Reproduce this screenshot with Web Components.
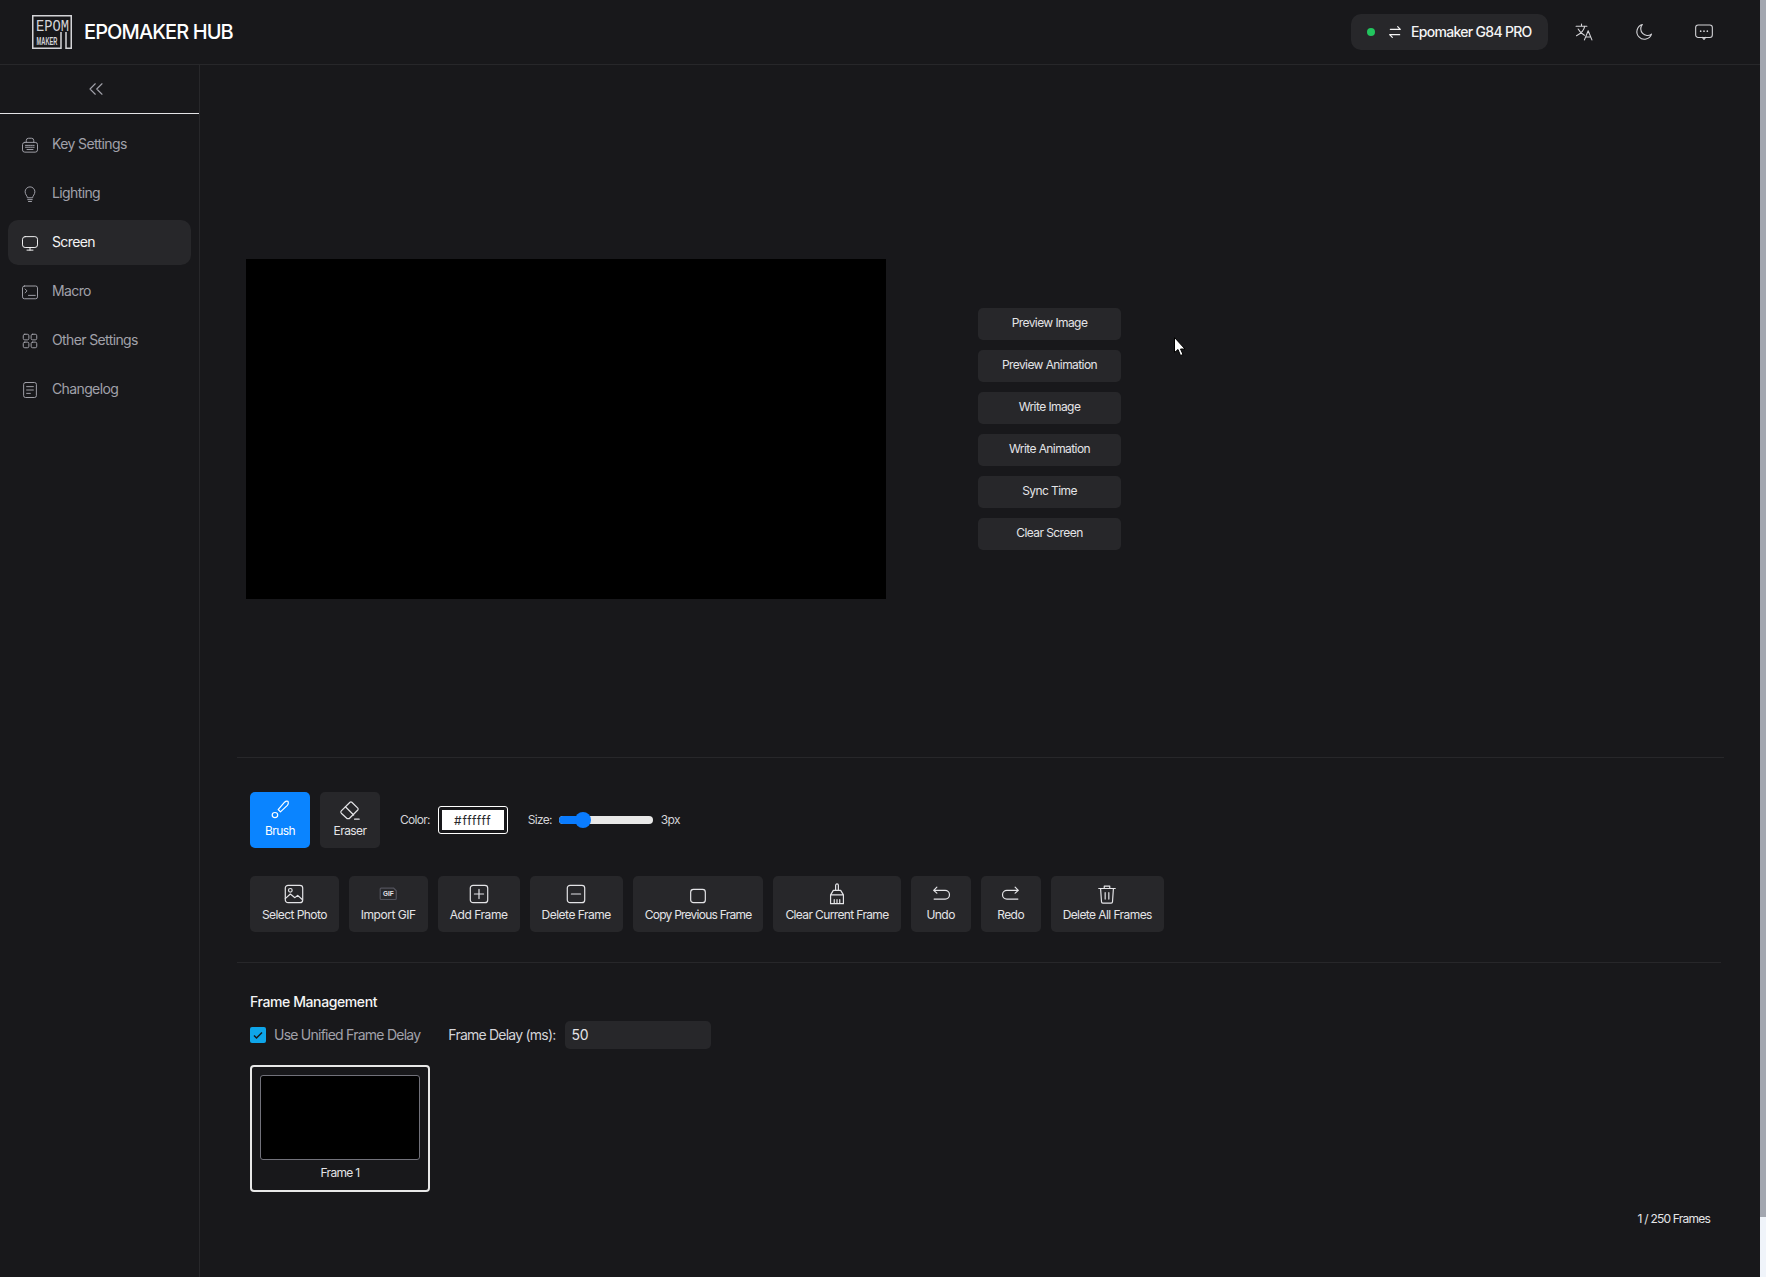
<!DOCTYPE html>
<html lang="en"><head><meta charset="utf-8"><title>Epomaker Hub</title>
<style>
html,body{margin:0;height:100%;background:#18181b;overflow:hidden}
body{font-family:Inter,"Noto Sans",sans-serif;color:#e4e4e7}
</style></head><body>
<ep-app>
  <ep-header slot="header"></ep-header>
  <ep-sidebar slot="side">
    <ep-nav icon="keyboard">Key Settings</ep-nav>
    <ep-nav icon="bulb">Lighting</ep-nav>
    <ep-nav icon="monitor" active>Screen</ep-nav>
    <ep-nav icon="terminal">Macro</ep-nav>
    <ep-nav icon="grid">Other Settings</ep-nav>
    <ep-nav icon="doc">Changelog</ep-nav>
  </ep-sidebar>
  <ep-preview slot="main">
    <ep-action>Preview Image</ep-action>
    <ep-action>Preview Animation</ep-action>
    <ep-action>Write Image</ep-action>
    <ep-action>Write Animation</ep-action>
    <ep-action>Sync Time</ep-action>
    <ep-action>Clear Screen</ep-action>
  </ep-preview>
  <ep-toolbar slot="main">
    <ep-tool icon="brush" active>Brush</ep-tool>
    <ep-tool icon="eraser">Eraser</ep-tool>
    <ep-brush-options slot="options"></ep-brush-options>
    <ep-tool slot="row" icon="image">Select Photo</ep-tool>
    <ep-tool slot="row" icon="gif" style="letter-spacing:-.46px">Import GIF</ep-tool>
    <ep-tool slot="row" icon="plus" style="letter-spacing:-.45px">Add Frame</ep-tool>
    <ep-tool slot="row" icon="minus" style="letter-spacing:-.5px">Delete Frame</ep-tool>
    <ep-tool slot="row" icon="square" style="letter-spacing:-.76px">Copy Previous Frame</ep-tool>
    <ep-tool slot="row" icon="broom" style="letter-spacing:-.63px">Clear Current Frame</ep-tool>
    <ep-tool slot="row" icon="undo">Undo</ep-tool>
    <ep-tool slot="row" icon="redo">Redo</ep-tool>
    <ep-tool slot="row" icon="trash">Delete All Frames</ep-tool>
  </ep-toolbar>
  <ep-frames slot="main"></ep-frames>
</ep-app>
<script>
const ICONS={
keyboard:'<rect x="2" y="8.500" width="20" height="13" rx="3"/><path d="M7 8.500V6a3 3 0 0 1 3-3h4a3 3 0 0 1 3 3v2.500"/><path d="M6 12.500h12M6 15h12" stroke-dasharray="1.500 1"/><path d="M8 18h8"/>',
bulb:'<path d="M8.500 16.500c0-2-3-3.800-3-7.500a6.500 6.500 0 0 1 13 0c0 3.700-3 5.500-3 7.500z"/><path d="M9 19.500h6M10 22h4"/>',
monitor:'<rect x="2" y="3.500" width="20" height="14.500" rx="3.500"/><path d="M12 18v3.500M8 21.500h8"/>',
terminal:'<rect x="2" y="4" width="20" height="17" rx="2.500"/><path d="M5.500 8l2.500 2.500-2.500 2.500M10 16.500h9"/>',
grid:'<rect x="3" y="3" width="7.500" height="7.500" rx="2"/><rect x="13.500" y="3" width="7.500" height="7.500" rx="2"/><rect x="3" y="13.500" width="7.500" height="7.500" rx="2"/><rect x="13.500" y="13.500" width="7.500" height="7.500" rx="2"/>',
doc:'<rect x="3.500" y="2" width="17" height="20" rx="2.500"/><path d="M7.500 7.500h9M7.500 12h9M7.500 16.500h5"/>',
swap:'<path d="M20 8H5M16 4l4 4M4 16h15M8 20l-4-4"/>',
translate:'<path d="M2.500 5h13M9 2.500V5M13 5c-1 4.500-4.500 9-10 11.500M5 8.500c1.500 3 4 5.500 7.500 7.500M12.500 21.500l4.500-11 4.500 11M14 18h6"/>',
moon:'<path d="M10 3a9 9 0 1 0 11 11.500A8 8 0 0 1 10 3z"/>',
chat:'<rect x="2" y="3.500" width="20" height="15" rx="3"/><path d="M10 18.500l2 2.500 2-2.500"/><path d="M8 11h.01M12 11h.01M16 11h.01" stroke-width="2"/>',
brush:'<path d="M20.500 2.500c-1-.5-2.500 0-3.500 1L10 11.500l2.500 2.500L20 7c1-1 1.500-3.500.5-4.500z"/><ellipse cx="6.500" cy="17.500" rx="3" ry="2.800"/>',
eraser:'<path d="M2.500 13L12 3.500a1.500 1.500 0 0 1 2 0l6.500 6.500a1.500 1.500 0 0 1 0 2L11 21.500H9L2.500 15.500a1.800 1.800 0 0 1 0-2.500z"/><path d="M7 8.500l9 9M17 22h5"/>',
image:'<rect x="2.500" y="2.500" width="19" height="19" rx="3"/><circle cx="8" cy="8" r="2"/><path d="M2.500 17l5.500-5 5 4 3-2.500 5 4.500"/>',
plus:'<rect x="2.500" y="2.500" width="19" height="19" rx="3"/><path d="M12 7v10M7 12h10"/>',
minus:'<rect x="2.500" y="2.500" width="19" height="19" rx="3"/><path d="M7 12h10"/>',
square:'<rect x="4" y="7" width="16" height="14.500" rx="3"/>',
broom:'<path d="M10.500 8V2.500a1.500 1.500 0 0 1 3 0V8"/><path d="M8 8h8l3 5H5zM5 13h14v9.500H5zM9 22.500V18M12 22.500V18M15 22.500V18"/>',
undo:'<path d="M4 8h12.500a4.700 4.700 0 0 1 0 9.500H4.500M7.500 4.500L4 8l3.500 3"/>',
redo:'<path d="M20 8H7.500a4.700 4.700 0 0 0 0 9.500h12M16.500 4.500L20 8l-3.500 3"/>',
trash:'<path d="M3 6h18M9 6V3.500h6V6M5 6l1 14.500a1.500 1.500 0 0 0 1.500 1.500h9a1.500 1.500 0 0 0 1.500-1.500L19 6M10 10.500v7M14 10.500v7"/>',
gif:'<path d="M3.500 6.500a1 1 0 0 1 1-1h13.500l3 3V17a1 1 0 0 1-1 1H4.500a1 1 0 0 1-1-1z" stroke="#52525b"/><text x="12.500" y="14.500" font-family="Liberation Sans" font-weight="700" font-size="7" letter-spacing="0" fill="#e4e4e7" stroke="none" text-anchor="middle">GIF</text>'
};
function def(name,html,extra){
  customElements.define(name,class extends HTMLElement{
    connectedCallback(){ if(this.shadowRoot) return;
      const r=this.attachShadow({mode:'open'});
      r.innerHTML=typeof html==='function'?html(this):html;
      if(extra) extra(this,r);
    }
  });
}
def('ep-icon',h=>{
  const s=h.getAttribute('size')||16;
  return `<style>:host{display:inline-flex;width:${s}px;height:${s}px;flex:none}svg{width:100%;height:100%;display:block}</style>
  <svg viewBox="0 0 24 24" fill="none" stroke="currentColor" stroke-width="${h.getAttribute('sw')||1.3}" stroke-linecap="round" stroke-linejoin="round">${ICONS[h.getAttribute('name')]}</svg>`;
});
def('ep-app',`<style>
:host{display:flex;width:1766px;height:1277px;overflow:hidden;position:relative;background:#18181b}
.app{width:1760px;display:flex;flex-direction:column}
.body{flex:1;display:flex;min-height:0}
main{flex:1;min-width:0;padding-left:37px;padding-right:36px;display:flex;flex-direction:column}
ep-scrollbar{flex:none}
ep-cursor{position:absolute;left:1174px;top:337px}
</style>
<div class="app"><slot name="header"></slot>
<div class="body"><slot name="side"></slot><main><slot name="main"></slot></main></div></div>
<ep-scrollbar></ep-scrollbar><ep-cursor></ep-cursor>`);
def('ep-scrollbar',`<style>:host{display:flex;flex-direction:column;width:6px;height:1277px;background:#f0f4fa}
.t{height:1217px;background:#a3a7b0}</style><div class="t"></div>`);
def('ep-cursor',`<style>:host{display:block;width:12px;height:20px}svg{display:block}</style>
<svg width="12" height="20" viewBox="0 0 12 20"><path d="M.5.500V15.500L4 12.500l2.500 6 2.500-1-2.500-5.500H11z" fill="#fff" stroke="#000" stroke-width="1"/></svg>`);
def('ep-header',`<style>
:host{display:flex;align-items:center;height:64px;border-bottom:1px solid #27272a;box-sizing:content-box;padding:0 26px 0 32px;justify-content:space-between}
.brand{display:flex;align-items:center;gap:12px;font-size:20px;font-weight:500;color:#fff;letter-spacing:-.9px;white-space:nowrap}
svg.logo{display:block;overflow:visible;letter-spacing:0}
.right{display:flex;align-items:center}
.dev{display:flex;align-items:center;height:36px;background:#27272a;border-radius:10px;padding:0 16px;font-size:14px;font-weight:500;color:#f4f4f5;letter-spacing:-.7px;margin-right:6px;box-sizing:border-box;width:197px;white-space:nowrap}
.dev b{font-weight:500;margin-bottom:2px}
.dot{width:8px;height:8px;border-radius:50%;background:#22c55e;margin-right:12px}
.sw{margin-right:8px;color:#f4f4f5}
.ib{width:60px;display:flex;justify-content:center;color:#d4d4d8}
</style>
<div class="brand"><svg class="logo" width="40" height="34" viewBox="0 0 40 34">
<path d="M29 17V33.250H.75V.75H39.250V33.250H34V17" fill="none" stroke="#d4d4d8" stroke-width="1.500"/>
<text x="4" y="16" font-family="Liberation Mono" font-size="16" fill="#d4d4d8" textLength="33" lengthAdjust="spacingAndGlyphs">EPOM</text>
<text x="4.500" y="30" font-family="Liberation Sans" font-weight="700" font-size="10" fill="#d4d4d8" textLength="21" lengthAdjust="spacingAndGlyphs">MAKER</text>
</svg><span>EPOMAKER HUB</span></div>
<div class="right"><div class="dev"><span class="dot"></span><ep-icon class="sw" name="swap" size="16" sw="1.800"></ep-icon><b>Epomaker G84 PRO</b></div>
<span class="ib"><ep-icon name="translate" size="20"></ep-icon></span><span class="ib"><ep-icon name="moon" size="20"></ep-icon></span><span class="ib"><ep-icon name="chat" size="20"></ep-icon></span></div>`);
def('ep-sidebar',`<style>
:host{display:block;width:199px;border-right:1px solid #27272a;flex:none}
.c{height:48px;border-bottom:1px solid #e4e4e7;display:flex;align-items:center;justify-content:center;color:#a1a1aa;padding-right:8px}
nav{display:flex;flex-direction:column;gap:4px;padding:8px}
</style><div class="c"><svg width="18" height="18" viewBox="0 0 24 24" fill="none" stroke="currentColor" stroke-width="1.500" stroke-linecap="round" stroke-linejoin="round"><path d="M11 5l-7 7 7 7M20 5l-7 7 7 7"/></svg></div><nav><slot></slot></nav>`);
def('ep-nav',h=>`<style>
:host{display:flex;align-items:center;height:45px;border-radius:10px;padding:0 13px;gap:13px;font-size:14px;letter-spacing:-.62px;color:${h.hasAttribute('active')?'#f4f4f5':'#a1a1aa'};background:${h.hasAttribute('active')?'#27272a':'transparent'};font-weight:400}
span{margin-bottom:3px}
</style><ep-icon name="${h.getAttribute('icon')}" size="18"></ep-icon><span><slot></slot></span>`);
def('ep-preview',`<style>
:host{display:flex;align-items:center;height:693px;border-bottom:1px solid #27272a;box-sizing:border-box;padding:35px 0 0 9px}
.cv{width:640px;height:340px;background:#000;flex:none}
.col{margin-left:92px;display:flex;flex-direction:column;gap:10px}
</style><div class="cv"></div><div class="col"><slot></slot></div>`);
def('ep-action',`<style>
:host{display:flex;align-items:center;justify-content:center;width:143px;height:32px;border-radius:5px;background:#27272a;font-size:12px;font-weight:400;letter-spacing:-.58px;color:#e4e4e7}
span{margin-bottom:3px}
</style><span><slot></slot></span>`);
def('ep-toolbar',`<style>
:host{display:flex;flex-direction:column;gap:28px;padding:34px 13px 30px;border-bottom:1px solid #27272a;margin-right:3px}
.r{display:flex;gap:10px;align-items:center}
</style><div class="r"><slot></slot><slot name="options"></slot></div><div class="r"><slot name="row"></slot></div>`);
def('ep-tool',h=>{const a=h.hasAttribute('active');return `<style>
:host{display:flex;flex-direction:column;align-items:center;justify-content:center;gap:2px;height:56px;box-sizing:border-box;padding:0 12px 4px;border-radius:5px;min-width:60px;background:${a?'#0a84ff':'#27272a'};font-size:12px;line-height:15px;letter-spacing:-.58px;color:${a?'#fff':'#e4e4e7'};white-space:nowrap}
</style><ep-icon name="${h.getAttribute('icon')}" size="22"></ep-icon><slot></slot>`});
def('ep-brush-options',`<style>
:host{display:flex;align-items:center;font-size:12px;letter-spacing:-.7px;color:#d4d4d8;margin-left:10px}
.t{margin-bottom:2px}
.in{width:70px;height:28px;box-sizing:border-box;border:1px solid #fff;border-radius:3px;padding:3px;display:flex;margin:0 20px 0 8px;background:#18181b}
.in span{flex:1;background:#fff;color:#27272a;font-size:12px;display:flex;align-items:center;justify-content:center;letter-spacing:.8px}
.s{position:relative;width:94px;height:8px;background:#e8e8e8;border-radius:4px;margin:0 8px 0 7px}
.f{position:absolute;left:0;top:0;height:8px;width:25px;background:#0a7cff;border-radius:4px 0 0 4px}
.th{position:absolute;left:16px;top:-4px;width:16px;height:16px;border-radius:50%;background:#0a7cff}
</style><span class="t">Color:</span><div class="in"><span>#ffffff</span></div><span class="t">Size:</span><div class="s"><div class="f"></div><div class="th"></div></div><span class="t">3px</span>`);
def('ep-frames',`<style>
:host{display:flex;flex-direction:column;padding:30px 13px 0;font-size:13px}
h3{margin:0;font-size:14px;font-weight:500;color:#f4f4f5;line-height:18px;letter-spacing:-.4px}
.o{display:flex;align-items:center;margin-top:10px;height:28px}
.cb{width:16px;height:16px;border-radius:2px;background:#0ea5e9;display:flex;align-items:center;justify-content:center;margin-right:8px}
.l{color:#a1a1aa;margin:0 28px 2px 0;font-size:14px;letter-spacing:-.76px}
.d{color:#d4d4d8;margin:0 9px 2px 0;font-size:14px;letter-spacing:-.77px}
.inp{width:146px;height:28px;border-radius:5px;background:#27272a;color:#e4e4e7;display:flex;align-items:center;padding:0 0 2px 7px;box-sizing:border-box;font-size:14px;letter-spacing:-.3px}
.card{margin-top:16px;width:180px;height:127px;box-sizing:border-box;border:2px solid #e8e8e8;border-radius:4px;padding:8px;display:flex;flex-direction:column;align-items:center}
.th{width:160px;height:85px;box-sizing:border-box;background:#000;border:1px solid #71717a;border-radius:3px;flex:none}
.n{font-size:12px;color:#e4e4e7;margin-top:5px;letter-spacing:-.7px}
.cnt{align-self:flex-end;font-size:12px;color:#e4e4e7;margin:19px 0 0;padding-right:1px;letter-spacing:-.78px}
</style><h3>Frame Management</h3>
<div class="o"><span class="cb"><svg width="12" height="12" viewBox="0 0 12 12" fill="none" stroke="#18181b" stroke-width="1.500"><path d="M2 6.500l2.500 2.500L10 3.500"/></svg></span><span class="l">Use Unified Frame Delay</span><span class="d">Frame Delay (ms):</span><span class="inp">50</span></div>
<div class="card"><div class="th"></div><div class="n">Frame 1</div></div>
<div class="cnt">1 / 250 Frames</div>`);
</script>
</body></html>
